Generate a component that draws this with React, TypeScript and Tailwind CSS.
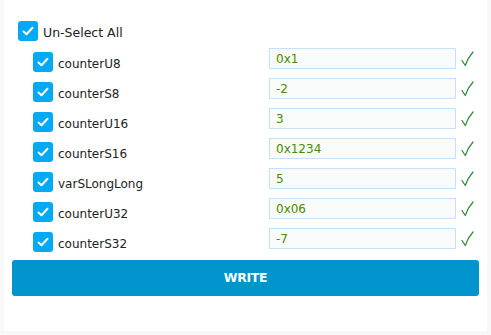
import { useState } from "react";

type Item = { name: string; value: string };

const items: Item[] = [
    { name: "counterU8", value: "0x1" },
    { name: "counterS8", value: "-2" },
    { name: "counterU16", value: "3" },
    { name: "counterS16", value: "0x1234" },
    { name: "varSLongLong", value: "5" },
    { name: "counterU32", value: "0x06" },
    { name: "counterS32", value: "-7" },
];

const Box = ({ checked, onClick }: { checked: boolean; onClick: () => void }) => (
    <button
        onClick={onClick}
        className={`w-5 h-5 shrink-0 rounded-[3px] flex items-center justify-center ${checked ? "bg-[#03a9f4]" : "bg-white border border-gray-400"}`}
    >
        {checked && (
            <svg width="14" height="14" viewBox="0 0 14 14" fill="none">
                <path d="M2.5 7.5 L5.5 10.3 L11.5 3.8" stroke="white" strokeWidth="2" strokeLinecap="round" strokeLinejoin="round" />
            </svg>
        )}
    </button>
);

const Valid = () => (
    <svg width="13" height="16" viewBox="0 0 13 16" fill="none">
        <path d="M1 9.5 L4.3 14.5 Q7 6.5 12 1" stroke="#2f8a3a" strokeWidth="1.25" strokeLinecap="round" strokeLinejoin="round" />
    </svg>
);

const App = () => {
    const [checked, setChecked] = useState<boolean[]>(items.map(() => true));
    const all = checked.every(Boolean);

    return (
        <div className="w-[491px] h-[335px] bg-[#f8f8f8] px-1 font-['DejaVu_Sans',sans-serif] text-[12px] text-[#222]">
            <div className="bg-white h-[331px] px-2 pt-[21px]">
                <div className="flex items-center h-5 ml-[6px] gap-[5px]">
                    <Box checked={all} onClick={() => setChecked(items.map(() => !all))} />
                    <span className="text-[12.5px] mt-[4px]">{all ? "Un-Select All" : "Select All"}</span>
                </div>
                <div className="mt-[6px] pl-[21px]">
                    {items.map((it, i) => (
                        <div key={it.name} className="flex items-center h-[30px]">
                            <Box
                                checked={checked[i]}
                                onClick={() => setChecked(checked.map((c, j) => (j === i ? !c : c)))}
                            />
                            <span className="flex-1 ml-[5px] mt-[3px]">{it.name}</span>
                            <div className="w-[187px] h-[21px] mb-[7px] bg-[#f9fafa] border border-[#c6e2fb] px-[6px] flex items-center text-[#4a8a00]">
                                {it.value}
                            </div>
                            <span className="w-[23px] flex justify-center mb-[6px]">
                                <Valid />
                            </span>
                        </div>
                    ))}
                </div>
                <button className="mt-[3px] w-full h-9 rounded-[3px] bg-[#0094cc] text-white font-bold text-[12.5px] tracking-tight">
                    WRITE
                </button>
            </div>
        </div>
    );
};

export default App;
